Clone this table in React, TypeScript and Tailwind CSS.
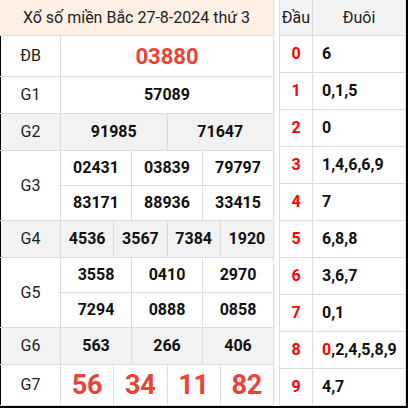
import React from "react";

type Row = { label: string; h: string; shade?: boolean; lines: string[][]; kind?: "db" | "g7" };

const rows: Row[] = [
  { label: "ĐB", h: "h-[41px]", lines: [["03880"]], kind: "db" },
  { label: "G1", h: "h-[37px]", lines: [["57089"]] },
  { label: "G2", h: "h-[37px]", shade: true, lines: [["91985", "71647"]] },
  { label: "G3", h: "h-[70px]", lines: [["02431", "03839", "79797"], ["83171", "88936", "33415"]] },
  { label: "G4", h: "h-[37px]", shade: true, lines: [["4536", "3567", "7384", "1920"]] },
  { label: "G5", h: "h-[70px]", lines: [["3558", "0410", "2970"], ["7294", "0888", "0858"]] },
  { label: "G6", h: "h-[37px]", shade: true, lines: [["563", "266", "406"]] },
  { label: "G7", h: "h-[41px]", lines: [["56", "34", "11", "82"]], kind: "g7" },
];

const loto: { head: string; tail: React.ReactNode }[] = [
  { head: "0", tail: "6" },
  { head: "1", tail: "0,1,5" },
  { head: "2", tail: "0" },
  { head: "3", tail: "1,4,6,6,9" },
  { head: "4", tail: "7" },
  { head: "5", tail: "6,8,8" },
  { head: "6", tail: "3,6,7" },
  { head: "7", tail: "0,1" },
  { head: "8", tail: <><span className="text-[#ff0000]">0</span>,2,4,5,8,9</> },
  { head: "9", tail: "4,7" },
];

function numClass(kind?: Row["kind"]) {
  if (kind === "db") return "text-[22px] text-[#eb4437]";
  if (kind === "g7") return "text-[27px] text-[#eb4437]";
  return "text-[16px] text-[#111]";
}

function ResultTable() {
  return (
    <div className="w-[274px] flex flex-col">
      <div className="h-[36px] bg-[#fdf1e6] border-b border-r border-[#dddddd] flex items-center justify-center text-[16px] text-[#222]">
        Xổ số miền Bắc 27-8-2024 thứ 3
      </div>
      {rows.map((r) => (
        <div key={r.label} className={`flex ${r.h} border-b border-[#dddddd] ${r.shade ? "bg-[#f2f2f2]" : "bg-white"}`}>
          <div className="w-[61px] shrink-0 border-l border-l-black border-r border-[#dddddd] flex items-center justify-center text-[16px] text-[#222]">
            {r.label}
          </div>
          <div className="flex-1 flex flex-col">
            {r.lines.map((line, i) => (
              <div key={i} className={`flex-1 flex ${i < r.lines.length - 1 ? "border-b border-[#dddddd]" : ""}`}>
                {line.map((n, j) => (
                  <div key={j} className={`flex-1 border-r border-[#dddddd] flex items-center justify-center font-bold ${numClass(r.kind)}`}>
                    {n}
                  </div>
                ))}
              </div>
            ))}
          </div>
        </div>
      ))}
    </div>
  );
}

function LotoTable() {
  return (
    <div className="ml-[5px] w-[127px] flex flex-col text-[16px]">
      <div className="h-[36px] flex bg-[#f3f3f3] border-b border-[#dddddd] text-[#222]">
        <div className="w-[34px] border-l border-r border-[#dddddd] flex items-center justify-center">Đầu</div>
        <div className="flex-1 border-r border-[#dddddd] flex items-center justify-center">Đuôi</div>
      </div>
      {loto.map((l) => (
        <div key={l.head} className="h-[37px] flex border-b border-[#dddddd] bg-white">
          <div className="w-[34px] border-l border-r border-[#dddddd] flex items-center justify-center font-bold text-[#ff0000]">
            {l.head}
          </div>
          <div className="flex-1 border-r border-[#dddddd] flex items-center pl-[9px] font-bold text-[#111]">
            {l.tail}
          </div>
        </div>
      ))}
    </div>
  );
}

export default function App() {
  return (
    <div className="w-[408px] h-[408px] bg-black" style={{ fontFamily: "Roboto, 'Liberation Sans', sans-serif" }}>
      <div className="w-[406px] h-[406px] bg-white flex">
        <ResultTable />
        <LotoTable />
      </div>
    </div>
  );
}
